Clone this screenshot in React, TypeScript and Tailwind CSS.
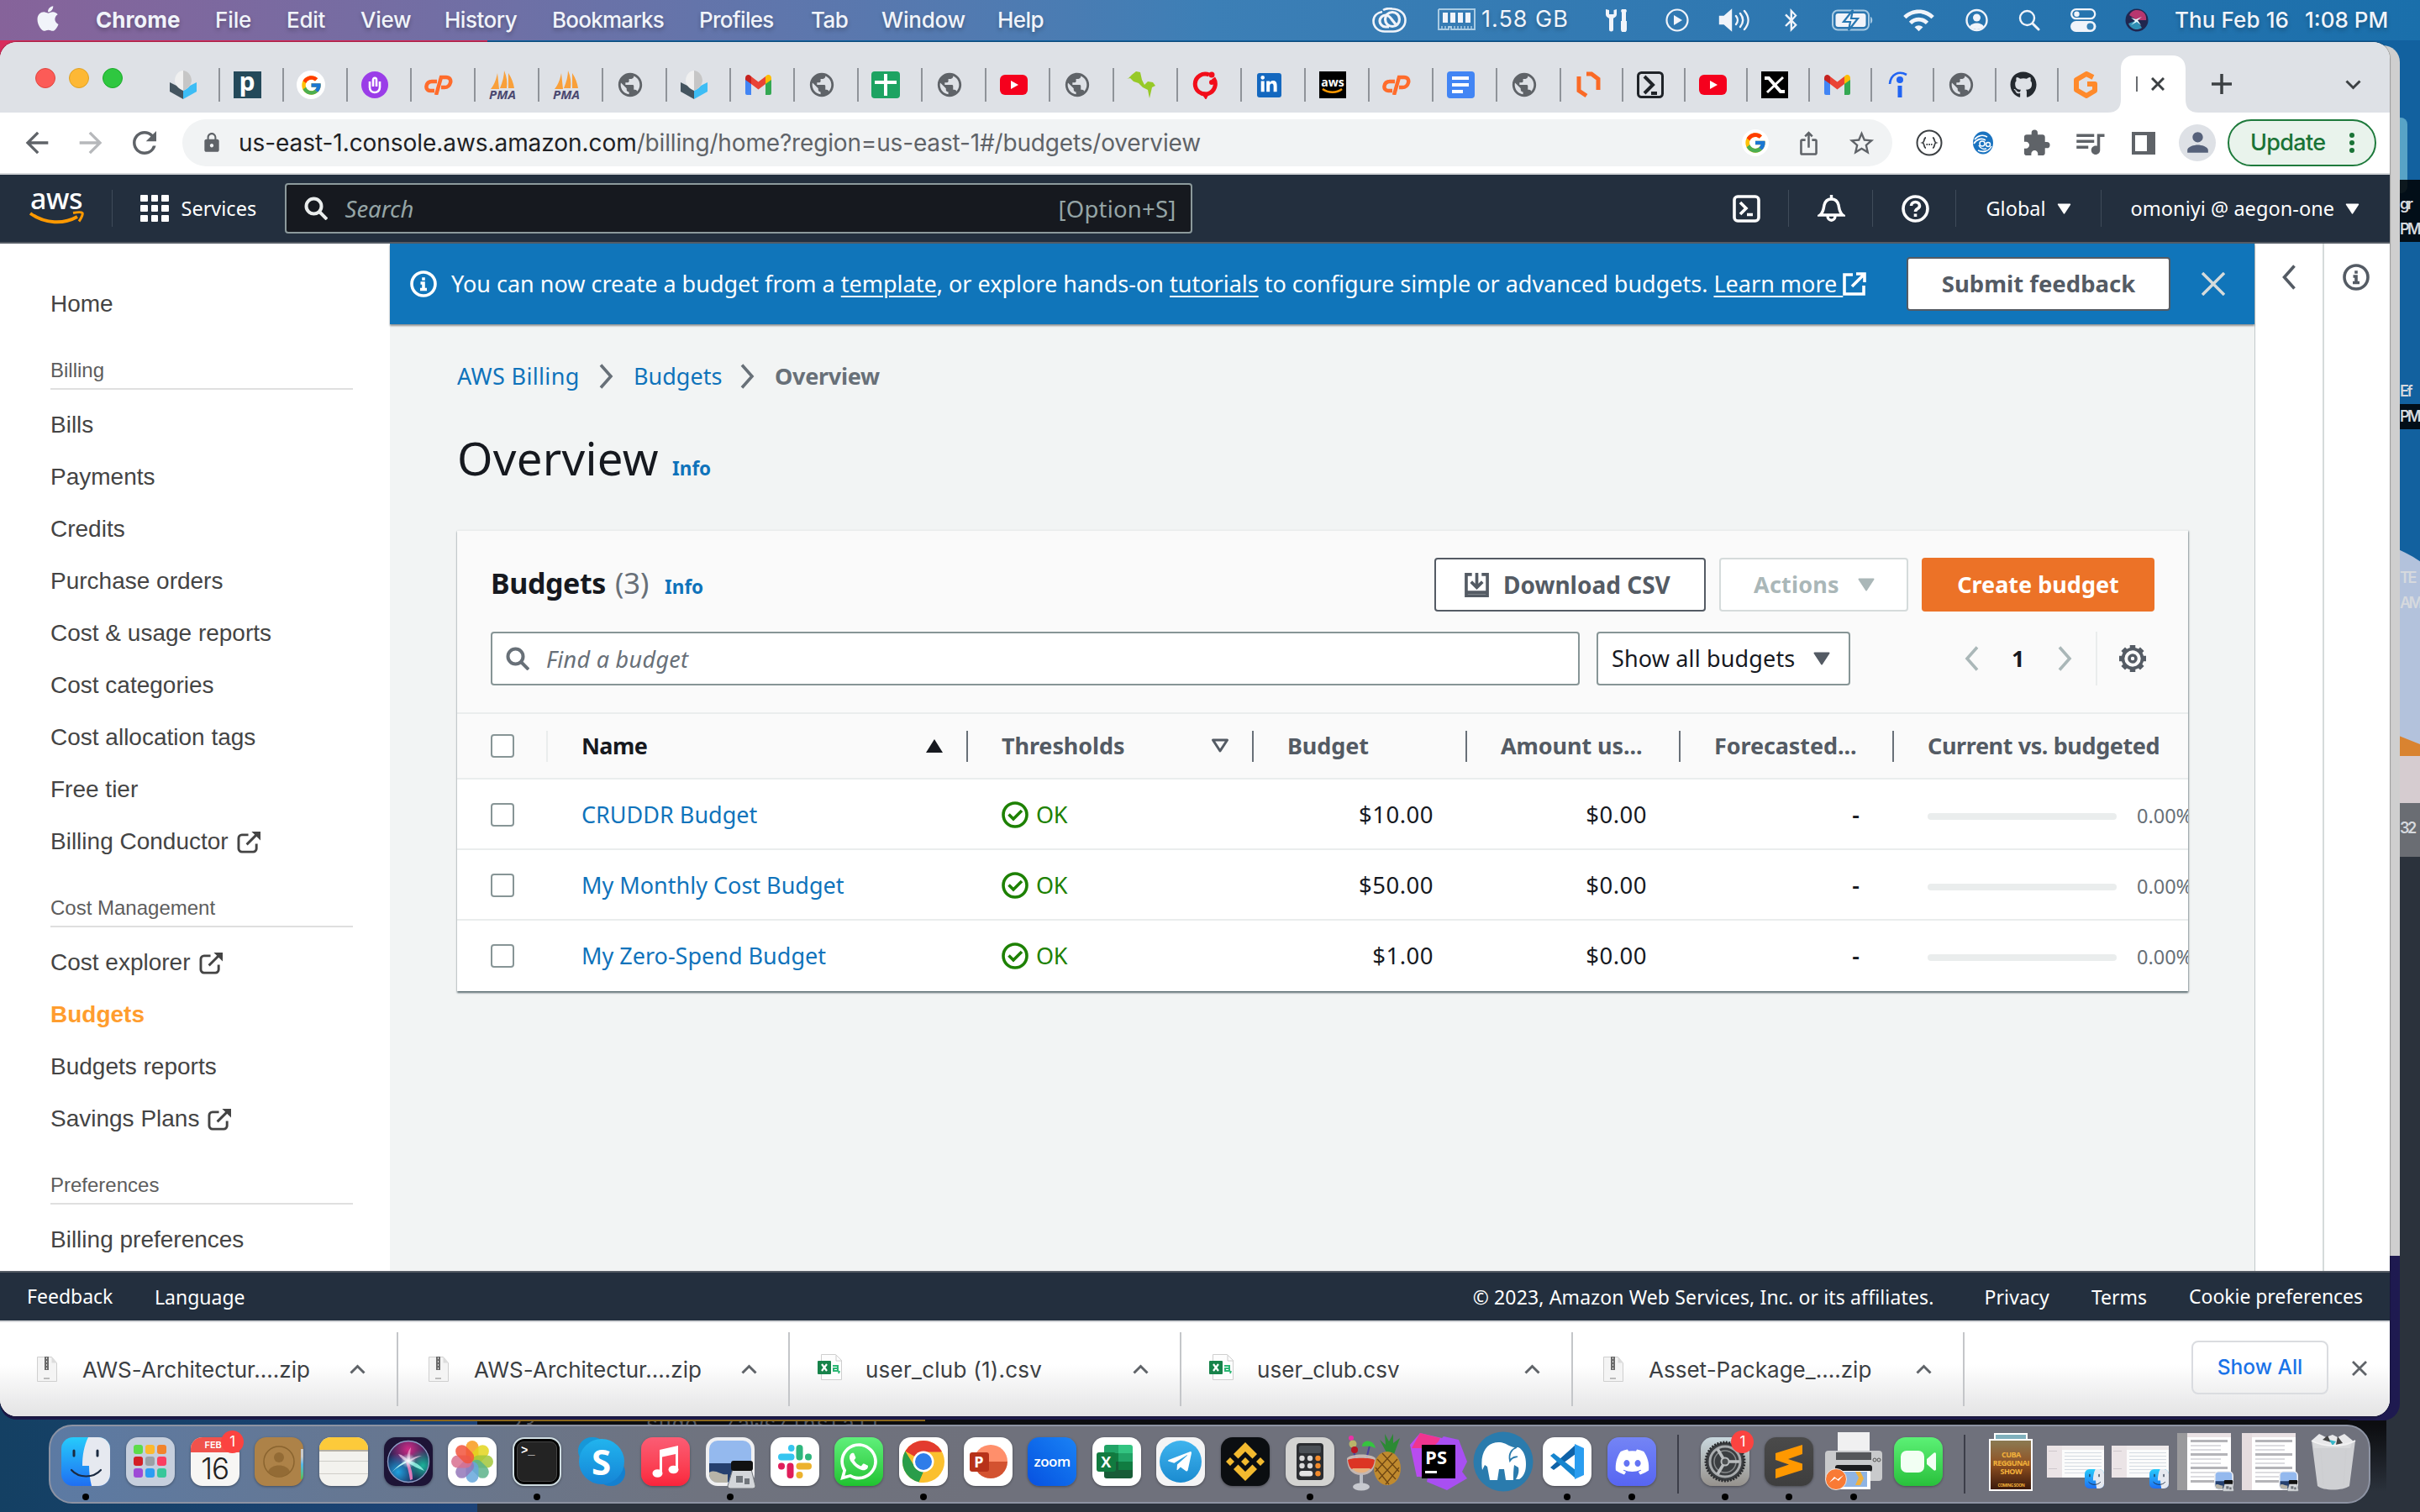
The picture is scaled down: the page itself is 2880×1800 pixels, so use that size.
import React from 'react';
import type { ReactNode } from 'react';
import {
  FaApple, FaBluetoothB, FaDiscord, FaGithub, FaLinkedinIn, FaWhatsapp, FaTelegramPlane,
} from 'react-icons/fa';
import {
  MdArrowBack, MdArrowForward, MdExtension, MdIosShare, MdLock, MdPerson, MdPublic, MdQueueMusic, MdRefresh,
  MdStarBorder, MdWifi,
} from 'react-icons/md';
import { FcGoogle } from 'react-icons/fc';

/* ---------- menu bar ---------- */

const menus = [
  { label: 'File', cls: 'w-[85px] tracking-[-0.1px]' },
  { label: 'Edit', cls: 'w-[88px] tracking-[-0.3px]' },
  { label: 'View', cls: 'w-[100px] tracking-[-0.3px]' },
  { label: 'History', cls: 'w-[128px] tracking-[-0.5px]' },
  { label: 'Bookmarks', cls: 'w-[175px] tracking-[-0.75px]' },
  { label: 'Profiles', cls: 'w-[133px] tracking-[-0.7px]' },
  { label: 'Tab', cls: 'w-[84px] tracking-[-0.6px]' },
  { label: 'Window', cls: 'w-[138px] tracking-[-0.2px]' },
  { label: 'Help', cls: 'w-[70px] tracking-[-0.6px]' },
];

function MenuBar() {
  return (
    <div className="absolute inset-x-0 top-0 flex h-[48px] items-center bg-linear-to-r from-[#86639a] via-[#3c7fb6] via-50% to-[#1a6fab] pb-[1px] font-['Inter',sans-serif] text-[26px] font-medium whitespace-nowrap text-[#f1f4fa] [text-shadow:0_3px_5px_rgba(0,0,0,0.25)]">
      <FaApple className="mb-[4px] ml-[42px] h-[34px] w-[30px] shrink-0" />
      <span className="ml-[42px] w-[142px] font-bold">Chrome</span>
      {menus.map((m) => (
        <span key={m.label} className={m.cls}>{m.label}</span>
      ))}
      <div className="mr-[36px] ml-auto flex items-center">
        <svg className="h-[30px] w-[41px]" viewBox="0 0 41 30" fill="none" stroke="#f1f4fa">
          <path d="M13 3C16 1 20 .8 24 1.500 33 2 39.500 7 39.500 15S33 28.500 25 28.500H15C7 28.500 1.500 23 1.500 16 1.500 10 6 6 12 5" strokeWidth="2.600" />
          <circle cx="24" cy="14" r="8.500" strokeWidth="3.200" />
          <path d="M20 23h-4a7 7 0 0 1 0-14c4 0 6 3 8 6l4 5" strokeWidth="3.200" />
        </svg>
        <svg className="ml-[37px] h-[27px] w-[45px]" viewBox="0 0 45 27" fill="none">
          <path d="M1 1h43v3.500M1 1v17M44 1v17M1 18v7h12v-3h3v3h28v-7" stroke="#a9cbe3" strokeWidth="2" />
          <path d="M6 5h6v12H6zM15 5h6v12h-6zM24 5h6v12h-6zM33 5h6v12h-6z" fill="#f1f4fa" />
          <path d="M5 21v4M9 21v4M20 21v4M24 21v4M28 21v4M32 21v4M36 21v4M40 21v4" stroke="#a9cbe3" strokeWidth="1.500" />
        </svg>
        <span className="ml-[7px] w-[104px] text-[27px] font-normal tracking-[1px]">1.58 GB</span>
        <svg className="ml-[43px] h-[28px] w-[30px]" viewBox="0 0 30 28" fill="#f1f4fa">
          <path d="M1 1v6c0 3 3 4 4 5v13a2.500 2.500 0 0 0 5 0V12c1-1 4-2 4-5V1l-3.500 1v5h-5.500V2z" />
          <path d="M20 1h5l1 2-1 2v10h1v10a3.500 3.500 0 0 1-7 0V15h1V5l-1-2z" />
        </svg>
        <svg className="ml-[42px] h-[28px] w-[28px]" viewBox="0 0 28 28">
          <circle cx="14" cy="14" r="12.500" fill="none" stroke="#f1f4fa" strokeWidth="2.200" />
          <path d="M10 8l10 6-10 6z" fill="#f1f4fa" />
        </svg>
        <svg className="ml-[35px] h-[28px] w-[38px]" viewBox="0 0 38 28" fill="none" stroke="#f1f4fa" strokeWidth="2.400" strokeLinecap="round">
          <path d="M2 10h5l8-7v22l-8-7H2z" fill="#f1f4fa" />
          <path d="M21 9c2.500 3 2.500 7 0 10M26 6c4 5 4 11 0 16M31 3c6 7 6 15 0 22" />
        </svg>
        <FaBluetoothB className="ml-[39px] h-[28px] w-[19px]" />
        <svg className="ml-[39px] h-[26px] w-[49px]" viewBox="0 0 49 26">
          <rect x="1" y="1.500" width="43" height="23" rx="6" fill="none" stroke="#a9cbe3" strokeWidth="2" />
          <rect x="4.500" y="5" width="36" height="16" rx="3" fill="#f1f4fa" />
          <path d="M46 9c3 1 3 7 0 8z" fill="#a9cbe3" />
          <path d="M25 1l-11 14h8l-2 10 11-14h-8z" fill="#f1f4fa" stroke="#2777b1" strokeWidth="2.200" />
        </svg>
        <MdWifi className="ml-[34px] h-[40px] w-[41px]" />
        <svg className="ml-[35px] h-[28px] w-[27px]" viewBox="0 0 27 28">
          <circle cx="13.500" cy="14" r="12" fill="none" stroke="#f1f4fa" strokeWidth="2.400" />
          <circle cx="13.500" cy="11" r="4.500" fill="#f1f4fa" />
          <path d="M5 22c2-6 15-6 17 0-5 4-12 4-17 0z" fill="#f1f4fa" />
        </svg>
        <svg className="ml-[36px] h-[26px] w-[26px]" viewBox="0 0 26 26" fill="none" stroke="#f1f4fa" strokeLinecap="round">
          <circle cx="10.500" cy="10.500" r="8.500" strokeWidth="2.400" />
          <path d="M17 17l7 7" strokeWidth="3" />
        </svg>
        <svg className="ml-[36px] h-[28px] w-[31px]" viewBox="0 0 31 28">
          <rect x="1.200" y="1.200" width="28" height="11" rx="5.500" fill="none" stroke="#f1f4fa" strokeWidth="2.300" />
          <circle cx="7.500" cy="6.700" r="3.200" fill="#f1f4fa" />
          <rect x="0" y="15" width="30.500" height="13" rx="6.500" fill="#f1f4fa" />
          <circle cx="23.500" cy="21.500" r="4" fill="#3680b6" />
        </svg>
        <svg className="ml-[34px] h-[28px] w-[28px]" viewBox="0 0 28 28">
          <circle cx="14" cy="14" r="13.500" fill="#20264f" />
          <path d="M14 2c8 0 12 6 11 12l-11 0-9-6c2-4 5-6 9-6z" fill="#b8366f" />
          <path d="M4 18l10-4 6 9c-6 4-13 2-16-5z" fill="#2f8fb4" />
          <path d="M7 11l6 2 7-3-5 4 4 6-5-4-7 4 5-5z" fill="#e8fbff" />
        </svg>
        <span className="ml-[31px] w-[155px] tracking-[0.100px]">Thu Feb 16</span>
        <span className="w-[101px] tracking-[0px]">1:08 PM</span>
      </div>
    </div>
  );
}

/* ---------- favicons ---------- */

const Globe = () => <MdPublic className="h-[34px] w-[34px] text-[#5f6368]" />;

const Box = () => (
  <svg className="h-[34px] w-[34px]" viewBox="0 0 34 34">
    <path d="M1 14l16 8v12L1 25z" fill="#44545f" />
    <path d="M33 14l-16 8v12l16-9z" fill="#3dbdf5" />
    <path d="M7 12C7 5 12 0 17 0s10 5 10 12c0 5-5 10-10 12C12 22 7 17 7 12z" fill="#f0f0f0" />
    <path d="M17 0c5 0 10 5 10 12 0 5-5 10-10 12z" fill="#c6c6c6" />
  </svg>
);

const Gmail = () => (
  <svg className="h-[24px] w-[31px]" viewBox="0 0 31 24">
    <path d="M0 4v18a2 2 0 0 0 2 2h5V9z" fill="#4285f4" />
    <path d="M31 4v18a2 2 0 0 1-2 2h-5V9z" fill="#34a853" />
    <path d="M24 2v9l7-5V4c0-4-4-5-6-3z" fill="#fbbc04" />
    <path d="M0 4v2l7 5V2L6 1C4-1 0 0 0 4z" fill="#c5221f" />
    <path d="M7 2l8.500 6.500L24 2v9l-8.500 6.500L7 11z" fill="#ea4335" />
  </svg>
);

const YouTube = () => (
  <svg className="h-[24px] w-[33px]" viewBox="0 0 33 24">
    <rect width="33" height="24" rx="6" fill="#f5001d" />
    <path d="M13 7l9 5-9 5z" fill="#fff" />
  </svg>
);

const CPanel = () => (
  <svg className="h-[24px] w-[34px]" viewBox="0 0 34 24" fill="none" stroke="#ff6c2c" strokeWidth="4.500">
    <path d="M15 8H9c-4 0-6 2.500-6.500 5.500S4 19 7 19h5" />
    <path d="M14 24L20 3h6c4 0 6 3 5 6.500S27 15 24 15h-4" />
  </svg>
);

const Pma = () => (
  <div className="flex h-[34px] w-[34px] flex-col items-center justify-end">
    <svg className="h-[22px] w-[30px]" viewBox="0 0 30 22" fill="#f9a03a">
      <path d="M1 22C6 16 8 8 9 3l2 19zM12 21C15 14 17 6 17 0c3 7 4 14 3 21zM22 21V3c4 6 6 12 7 18z" />
    </svg>
    <span className="font-['Open_Sans',sans-serif] text-[15px] leading-[12px] font-bold text-[#4a4870] italic">PMA</span>
  </div>
);

const Tile = ({ cls, children }: { cls: string; children: ReactNode }) => (
  <div className={`flex items-center justify-center overflow-hidden font-['Open_Sans',sans-serif] font-bold text-white ${cls}`}>{children}</div>
);

const G = () => (
  <Tile cls="h-[34px] w-[34px] rounded-full bg-white"><FcGoogle className="h-[27px] w-[27px]" /></Tile>
);

const favicons: ReactNode[] = [
  <Box />,
  <Tile cls="h-[32px] w-[33px] bg-[#24495a] text-[30px] leading-none pb-[8px]">p</Tile>,
  <G />,
  <Tile cls="h-[32px] w-[32px] rounded-full bg-[#9a3de8]">
    <svg className="h-[22px] w-[16px]" viewBox="0 0 16 22" fill="none" stroke="#fff" strokeWidth="2.600"><path d="M2 7v7c0 8 12 8 12 0V7M6 13V5c0-3 4-3 4 0v8" /></svg>
  </Tile>,
  <CPanel />, <Pma />, <Pma />, <Globe />, <Box />, <Gmail />, <Globe />,
  <Tile cls="h-[32px] w-[34px] rounded-[4px] bg-[#1da362]">
    <svg className="h-[26px] w-[26px]" viewBox="0 0 26 26" fill="none" stroke="#fff" strokeWidth="4"><path d="M13 0v26M0 10h26" /></svg>
  </Tile>,
  <Globe />, <YouTube />, <Globe />,
  <svg className="h-[32px] w-[34px]" viewBox="0 0 34 32" fill="#97c927"><path d="M1 9L6 4l5-4 5 1 2 9 3 6 4-4 6 1 3 4-4 2-3 13-2-10-6-3-5-5-6-2-4-4-4 1z" /></svg>,
  <svg className="h-[34px] w-[34px]" viewBox="0 0 34 34" fill="none" stroke="#f20d1a">
    <path d="M22 5a12 12 0 1 0 5 4" strokeWidth="5" /><circle cx="25" cy="5" r="3.500" fill="#f20d1a" stroke="none" /><path d="M13 26l5 7 3-6z" fill="#f20d1a" strokeWidth="2" /><circle cx="25" cy="14" r="3" fill="#f20d1a" stroke="none" />
  </svg>,
  <Tile cls="h-[29px] w-[29px] rounded-[3px] bg-[#1468bf]"><FaLinkedinIn className="h-[22px] w-[22px]" /></Tile>,
  <Tile cls="h-[32px] w-[32px] flex-col bg-black">
    <span className="text-[14px] leading-[14px]">aws</span>
    <svg className="h-[7px] w-[26px]" viewBox="0 0 26 7" fill="none" stroke="#f90" strokeWidth="2.500"><path d="M1 1c7 5 17 5 23 0" /></svg>
  </Tile>,
  <CPanel />,
  <Tile cls="h-[32px] w-[33px] rounded-[4px] bg-[#4285f4]">
    <svg className="h-[20px] w-[20px]" viewBox="0 0 20 20" stroke="#fff" strokeWidth="4"><path d="M0 2h20M0 10h20M0 18h13" /></svg>
  </Tile>,
  <Globe />,
  <svg className="h-[32px] w-[32px]" viewBox="0 0 32 32" fill="none" stroke="#fa6a26" strokeWidth="5"><path d="M5 6v17l9 6M14 3h6l8 6v13" /></svg>,
  <svg className="h-[32px] w-[32px]" viewBox="0 0 32 32" fill="none" stroke="#1f2328"><rect x="1.500" y="1.500" width="29" height="29" rx="4" strokeWidth="3" /><path d="M9 6l10 10L9 26M17 26h7" strokeWidth="4" /></svg>,
  <YouTube />,
  <Tile cls="h-[32px] w-[32px] bg-black">
    <svg className="h-[22px] w-[28px]" viewBox="0 0 28 22" fill="none" stroke="#fff" strokeWidth="4"><path d="M2 3h5l14 16h5" /><path d="M24 2L5 20" strokeWidth="3" /></svg>
  </Tile>,
  <Gmail />,
  <svg className="h-[32px] w-[26px]" viewBox="0 0 26 32" fill="none" stroke="#2164f3"><path d="M2 15C3 3 13-1 22 4" strokeWidth="2.600" /><circle cx="14" cy="10" r="4" fill="#2164f3" stroke="none" /><path d="M14 17v14" strokeWidth="5" /></svg>,
  <Globe />,
  <FaGithub className="h-[32px] w-[32px] text-[#24292f]" />,
  <svg className="h-[32px] w-[32px]" viewBox="0 0 32 32" fill="none" stroke="#ff8a2b" strokeWidth="6" strokeLinejoin="round"><path d="M25 7l-8-4L5 10v12l12 7 10-6v-8h-9" /></svg>,
];

function TabStrip() {
  return (
    <div className="flex h-[84px] shrink-0 items-start bg-[#dee1e6]">
      <div className="mt-[31px] ml-[42px] flex w-[144px] gap-[16px]">
        <div className="h-[24px] w-[24px] rounded-full border border-[#e0443e] bg-[#fc5b57]" />
        <div className="h-[24px] w-[24px] rounded-full border border-[#dea123] bg-[#fdb835]" />
        <div className="h-[24px] w-[24px] rounded-full border border-[#1aab29] bg-[#2fc740]" />
      </div>
      {favicons.map((icon, i) => (
        <div
          key={i}
          className={
            (i < 22 ? 'w-[76px] ' : 'w-[74px] ') +
            'mt-[31px] flex h-[40px] shrink-0 items-center border-r-2 ' +
            (i === favicons.length - 1 ? 'border-transparent' : 'border-[#8f9399]')
          }
        >
          <div className="ml-[14px] flex w-[36px] items-center justify-center">{icon}</div>
        </div>
      ))}
      <div className="relative mt-[16px] flex h-[68px] w-[78px] shrink-0 items-center">
        <svg className="absolute top-0 left-[-16px] h-[68px] w-[109px]" viewBox="0 0 109 68" fill="#fff">
          <path d="M0 68c12 0 16-6 16-16V16C16 6 22 0 32 0h45c10 0 16 6 16 16v36c0 10 4 16 16 16z" />
        </svg>
        <div className="relative ml-[18px] h-[18px] w-[2px] bg-[#6a6d71]" />
        <svg className="relative ml-[16px] h-[16px] w-[16px]" viewBox="0 0 16 16" stroke="#3c4043" strokeWidth="3"><path d="M1 1l14 14M15 1L1 15" /></svg>
      </div>
      <svg className="mt-[38px] ml-[29px] h-[24px] w-[26px]" viewBox="0 0 26 24" stroke="#3c4043" strokeWidth="3.500"><path d="M13 0v24M1 12h24" /></svg>
      <svg className="mt-[45px] ml-[134px] h-[12px] w-[19px]" viewBox="0 0 19 12" fill="none" stroke="#3c4043" strokeWidth="3"><path d="M1.500 1.500l8 8 8-8" /></svg>
    </div>
  );
}

function Toolbar() {
  return (
    <div className="flex h-[74px] shrink-0 items-center border-b-2 border-[#d5d7da] bg-white font-['Inter',sans-serif] text-[28px] whitespace-nowrap text-[#5f6368]">
      <MdArrowBack className="ml-[24px] h-[40px] w-[40px]" />
      <MdArrowForward className="ml-[24px] h-[40px] w-[40px] text-[#b6b8bb]" />
      <MdRefresh className="ml-[23px] h-[42px] w-[42px]" />
      <div className="ml-[24px] flex h-[56px] w-[2035px] items-center rounded-full bg-[#f1f3f4]">
        <MdLock className="ml-[22px] h-[26px] w-[26px]" />
        <span className="ml-[19px] tracking-[-0.060px] text-[#202124]">us-east-1.console.aws.amazon.com</span>
        <span className="tracking-[-0.160px]">/billing/home?region=us-east-1#/budgets/overview</span>
        <div className="mr-[19px] ml-auto flex items-center">
          <Tile cls="mr-[1px] h-[32px] w-[32px] rounded-full bg-white"><FcGoogle className="h-[28px] w-[28px]" /></Tile>
          <MdIosShare className="ml-[31px] h-[31px] w-[31px]" />
          <MdStarBorder className="ml-[30px] h-[35px] w-[35px]" />
        </div>
      </div>
      <svg className="ml-[28px] h-[32px] w-[32px]" viewBox="0 0 32 32" fill="none" stroke="#3c4043">
        <circle cx="16" cy="16" r="14.500" strokeWidth="2" />
        <path d="M12 10c-3 0-1 5-4 6 3 1 1 6 4 6M20 10c3 0 1 5 4 6-3 1-1 6-4 6" strokeWidth="1.800" />
        <path d="M12.500 18h7" strokeWidth="2" strokeDasharray="1.600 1.200" />
      </svg>
      <svg className="ml-[36px] h-[28px] w-[24px]" viewBox="0 0 24 28">
        <ellipse cx="12" cy="14" rx="12" ry="13.500" fill="#1a73c0" />
        <path d="M2 10c4-5 10-6 15-3M1 15c4-6 10-7 14-4M6 23c6 3 13 1 16-5M7 17c2 4 6 5 9 4" fill="none" stroke="#fff" strokeWidth="1.600" />
        <circle cx="11" cy="15" r="3" fill="none" stroke="#fff" strokeWidth="1.500" /><circle cx="18" cy="16" r="2.500" fill="none" stroke="#fff" strokeWidth="1.500" />
      </svg>
      <MdExtension className="ml-[34px] h-[35px] w-[35px]" />
      <MdQueueMusic className="ml-[25px] h-[42px] w-[42px]" />
      <div className="ml-[29px] h-[27px] w-[28px] border-[4px] border-r-[10px] border-[#5f6368]" />
      <div className="ml-[28px] flex h-[44px] w-[44px] items-end justify-center overflow-hidden rounded-full bg-[#dee1e6]">
        <MdPerson className="mb-[4px] h-[37px] w-[37px] text-[#56617a]" />
      </div>
      <div className="ml-[14px] flex h-[56px] w-[177px] items-center rounded-full border-2 border-[#1e7a3c] bg-[#e9f3ec] text-[27px] font-medium text-[#1a7336]">
        <span className="ml-[25px] w-[88px] tracking-[-0.700px]">Update</span>
        <svg className="ml-[30px] h-[24px] w-[6px]" viewBox="0 0 6 24" fill="#1a7336"><circle cx="3" cy="3" r="3" /><circle cx="3" cy="12" r="3" /><circle cx="3" cy="21" r="3" /></svg>
      </div>
    </div>
  );
}

/* ---------- AWS console ---------- */

const SearchIcon = ({ cls }: { cls: string }) => (
  <svg className={cls} viewBox="0 0 28 28" fill="none" stroke="currentColor" strokeWidth="4"><circle cx="11.500" cy="11.500" r="9" /><path d="M18 18l9 9" /></svg>
);

const Caret = ({ cls }: { cls: string }) => (
  <svg className={cls} viewBox="0 0 20 16" fill="currentColor" stroke="currentColor" strokeWidth="2" strokeLinejoin="round"><path d="M1.500 1.500h17L10 14.500z" /></svg>
);

const InfoIcon = ({ cls }: { cls: string }) => (
  <svg className={cls} viewBox="0 0 32 32" fill="none" stroke="currentColor"><circle cx="16" cy="16" r="14" strokeWidth="3.600" /><path d="M12.500 15H16v7M12 22.500h8M14.200 10h3.600" strokeWidth="3.600" /></svg>
);

const External = ({ cls }: { cls: string }) => (
  <svg className={cls} viewBox="0 0 28 28" fill="none" stroke="currentColor" strokeWidth="3.600"><path d="M12 3H2v23h23V16M16 2h10v10M25 3L11 17" /></svg>
);

const ConsoleDivider = () => <div className="h-[44px] w-[1px] bg-[#3f4b59]" />;

function ConsoleHeader() {
  return (
    <div className="flex h-[82px] shrink-0 items-center border-b-2 border-[#545b64] bg-[#232f3e] font-['Noto_Sans',sans-serif] text-[23.500px] whitespace-nowrap text-white">
      <div className="mb-[3px] ml-[34px] flex w-[66px] flex-col items-center">
        <span className="h-[25px] text-[34px] leading-[20px] font-medium tracking-[-0.500px]">aws</span>
        <svg className="h-[16px] w-[66px]" viewBox="0 0 66 16" fill="none" stroke="#f90"><path d="M2 3c18 13 40 13 56 4" strokeWidth="4" /><path d="M53 2.500c5-1 10-1 11 0s-1 6-4 10" strokeWidth="3" /></svg>
      </div>
      <div className="ml-[33px] h-[44px] w-[1px] bg-[#3f4b59]" />
      <div className="ml-[33px] grid grid-cols-3 gap-[4px]">
        {Array.from({ length: 9 }, (_, i) => <div key={i} className="h-[8px] w-[8.500px] rounded-[1px] bg-white" />)}
      </div>
      <span className="ml-[15px] w-[123px] pt-[1px]">Services</span>
      <div className="flex h-[60px] w-[1080px] items-center rounded-[4px] border-2 border-[#8c9a9c] bg-[#16191f] text-[27.500px] text-[#95a5a6]">
        <SearchIcon cls="ml-[21px] h-[28px] w-[28px] text-[#eaeded]" />
        <span className="ml-[21px] pt-[2px] italic">Search</span>
        <span className="mr-[17px] ml-auto pt-[1px] tracking-[0.200px]">[Option+S]</span>
      </div>
      <svg className="ml-[643px] h-[33px] w-[33px]" viewBox="0 0 33 33" fill="none" stroke="#fff" strokeWidth="3.600"><rect x="2" y="2" width="29" height="29" rx="4" /><path d="M9 9l7 7-7 7M17 23.500h7" /></svg>
      <div className="ml-[33px]"><ConsoleDivider /></div>
      <svg className="ml-[34px] h-[33px] w-[33px]" viewBox="0 0 33 33" fill="none" stroke="#fff" strokeWidth="3.400"><path d="M3 24c4-3 4-7 5-12 1-4 4-7 8.500-7S24 8 25 12c1 5 1 9 5 12zM16.500 0v5M12 25c0 7 9 7 9 0" /></svg>
      <div className="ml-[32px]"><ConsoleDivider /></div>
      <svg className="ml-[34px] h-[33px] w-[33px]" viewBox="0 0 33 33" fill="none" stroke="#fff" strokeWidth="3.600"><circle cx="16.500" cy="16.500" r="14.500" /><path d="M11.500 13c0-6 10-6 10 0 0 4-5 3-5 7M16.500 22.500v3.500" /></svg>
      <div className="ml-[31px]"><ConsoleDivider /></div>
      <span className="ml-[36px] w-[84px] pt-[1px]">Global</span>
      <Caret cls="h-[13px] w-[17px]" />
      <div className="ml-[35px]"><ConsoleDivider /></div>
      <span className="ml-[35px] w-[255px] pt-[1px] tracking-[0.050px]">omoniyi @ aegon-one</span>
      <Caret cls="h-[13px] w-[17px]" />
    </div>
  );
}

type NavItem = { label: string; external?: boolean; active?: boolean };

const navGroups: { title: string; items: NavItem[] }[] = [
  {
    title: 'Billing',
    items: [
      { label: 'Bills' }, { label: 'Payments' }, { label: 'Credits' }, { label: 'Purchase orders' },
      { label: 'Cost & usage reports' }, { label: 'Cost categories' }, { label: 'Cost allocation tags' },
      { label: 'Free tier' }, { label: 'Billing Conductor', external: true },
    ],
  },
  {
    title: 'Cost Management',
    items: [
      { label: 'Cost explorer', external: true }, { label: 'Budgets', active: true },
      { label: 'Budgets reports' }, { label: 'Savings Plans', external: true },
    ],
  },
  { title: 'Preferences', items: [{ label: 'Billing preferences' }] },
];

function SideNav() {
  return (
    <nav className="flex w-[464px] shrink-0 flex-col bg-white pt-[41px] pl-[60px] font-['Liberation_Sans',sans-serif] text-[28px] whitespace-nowrap text-[#444]">
      <div className="flex h-[62px] items-center">Home</div>
      {navGroups.map((g) => (
        <div key={g.title} className="flex flex-col">
          <div className="flex h-[71px] w-[360px] items-end border-b-2 border-[#dfdfdf] text-[24px] leading-[42px] text-[#5d5d5d]">{g.title}</div>
          <div className="pt-[11px]">
            {g.items.map((n) => (
              <div key={n.label} className={'flex h-[62px] items-center ' + (n.active ? 'font-bold text-[#ff9d2e]' : '')}>
                {n.label}
                {n.external && (
                  <svg className="ml-[10px] h-[27px] w-[29px]" viewBox="0 0 30 28" fill="none" stroke="#444" strokeWidth="3"><path d="M14 5H6a4 4 0 0 0-4 4v13a4 4 0 0 0 4 4h14a4 4 0 0 0 4-4v-6M12 17L26 3" /><path d="M18 1h11v11z" fill="#444" stroke="none" /></svg>
                )}
              </div>
            ))}
          </div>
        </div>
      ))}
    </nav>
  );
}

function Banner() {
  return (
    <div className="relative flex h-[96px] shrink-0 items-center bg-[#1075ba] pl-[24px] text-[27px] whitespace-nowrap text-white shadow-[0_2px_2px_rgba(0,0,0,0.400)]">
      <InfoIcon cls="h-[32px] w-[32px]" />
      <span className="ml-[17px]">
        You can now create a budget from a <span className="underline underline-offset-4">template</span>, or explore hands-on{' '}
        <span className="underline underline-offset-4">tutorials</span> to configure simple or advanced budgets.{' '}
        <span className="underline underline-offset-4">Learn more&nbsp;</span>
      </span>
      <External cls="h-[28px] w-[28px]" />
      <div className="ml-auto flex h-[64px] w-[314px] items-center justify-center rounded-[4px] border-2 border-[#545b64] bg-white text-[27.500px] font-bold text-[#545b64]">Submit feedback</div>
      <svg className="mr-[35px] ml-[37px] h-[28px] w-[28px]" viewBox="0 0 28 28" stroke="#d5dbdb" strokeWidth="3.500"><path d="M1 1l26 26M27 1L1 27" /></svg>
    </div>
  );
}

const Checkbox = () => <div className="ml-[40px] h-[28px] w-[28px] rounded-[4px] border-2 border-[#879596] bg-white" />;

const ChevronRight = ({ cls }: { cls: string }) => (
  <svg className={cls} viewBox="0 0 17 30" fill="none" stroke="currentColor" strokeWidth="3.600"><path d="M2 1.500l12 13.500L2 28.500" /></svg>
);

const rows = [
  { name: 'CRUDDR Budget', budget: '$10.00' },
  { name: 'My Monthly Cost Budget', budget: '$50.00' },
  { name: 'My Zero-Spend Budget', budget: '$1.00' },
];

const HeadCell = ({ children }: { children: ReactNode }) => (
  <div className="flex items-center justify-between">
    <span className="pl-[40px]">{children}</span>
    <div className="h-[37px] w-[2px] bg-[#687078]" />
  </div>
);

function BudgetsCard() {
  return (
    <section className="flex w-[2060px] shrink-0 flex-col overflow-hidden bg-white text-[27px] whitespace-nowrap text-[#16191f]">
      <div className="flex flex-col gap-[24px] border-t border-b-2 border-[#eaeded] bg-[#fafafa] px-[40px] pt-[32px] pb-[32px]">
        <div className="flex h-[64px] items-center">
          <div className="flex w-[1123px] items-baseline leading-[60px]">
            <h2 className="w-[148px] text-[34px] font-bold tracking-[-0.400px]">Budgets</h2>
            <span className="w-[59px] text-[34.500px] text-[#687078]">(3)</span>
            <span className="text-[22.500px] font-bold text-[#0f73bb]">Info</span>
          </div>
          <div className="flex h-[64px] w-[323px] items-center rounded-[4px] border-2 border-[#545b64] bg-white font-bold text-[#545b64]">
            <svg className="ml-[34px] h-[29px] w-[29px]" viewBox="0 0 30 30" fill="none" stroke="currentColor" strokeWidth="3.800"><path d="M9 2H2v26h26V2h-7M15 0v17M8 11l7 7 7-7M2 24h26" /></svg>
            <span className="ml-[17px] text-[28px]">Download CSV</span>
          </div>
          <div className="ml-[16px] flex h-[64px] w-[225px] items-center rounded-[4px] border-2 border-[#d5dbdb] bg-white font-bold text-[#aab7b8]">
            <span className="ml-[39px] w-[124px] tracking-[0.200px]">Actions</span>
            <Caret cls="h-[16px] w-[20px]" />
          </div>
          <div className="ml-[16px] flex h-[64px] w-[277px] items-center justify-center rounded-[4px] bg-[#ec7227] font-bold text-white">Create budget</div>
        </div>
        <div className="flex h-[64px] items-center">
          <div className="flex h-[64px] w-[1296px] items-center rounded-[4px] border-2 border-[#879596] bg-white text-[#687078]">
            <SearchIcon cls="ml-[16px] h-[28px] w-[28px]" />
            <span className="ml-[20px] pt-[2px] tracking-[0.300px] italic">Find a budget</span>
          </div>
          <div className="ml-[20px] flex h-[64px] w-[302px] items-center rounded-[4px] border-2 border-[#879596] bg-white">
            <span className="ml-[16px] w-[240px] tracking-[0.150px]">Show all budgets</span>
            <Caret cls="h-[16px] w-[20px] text-[#545b64]" />
          </div>
          <ChevronRight cls="ml-[136px] h-[30px] w-[17px] rotate-180 text-[#aab7b8]" />
          <span className="ml-[39px] w-[55px] font-bold">1</span>
          <ChevronRight cls="h-[30px] w-[17px] text-[#aab7b8]" />
          <div className="ml-[28px] h-[64px] w-[2px] bg-[#eaeded]" />
          <svg className="ml-[26px] h-[32px] w-[32px]" viewBox="0 0 32 32" fill="none" stroke="#545b64" strokeLinejoin="round">
            <circle cx="16" cy="16" r="11.500" strokeWidth="3.600" />
            <path d="M16 0v4M16 28v4M0 16h4M28 16h4M4.700 4.700l2.800 2.800M24.500 24.500l2.800 2.800M4.700 27.300l2.800-2.800M24.500 7.500l2.800-2.800" strokeWidth="6.500" />
            <circle cx="16" cy="16" r="4" strokeWidth="3.600" />
          </svg>
        </div>
      </div>
      <div className="grid h-[78px] grid-cols-[108px_500px_340px_254px_254px_254px_350px] items-center border-b-2 border-[#eaeded] bg-[#fafafa] font-bold tracking-[-0.100px] text-[#545b64]">
        <div className="flex items-center justify-between"><Checkbox /><div className="h-[37px] w-[2px] bg-[#eaeded]" /></div>
        <div className="flex items-center text-[#16191f]">
          <span className="ml-[40px] w-[409px] tracking-[-0.600px]">Name</span>
          <svg className="h-[17px] w-[22px]" viewBox="0 0 22 17" fill="#16191f"><path d="M11 0l10 16H1z" /></svg>
          <div className="ml-auto h-[37px] w-[2px] bg-[#687078]" />
        </div>
        <div className="flex items-center">
          <span className="ml-[40px] w-[249px]">Thresholds</span>
          <svg className="h-[18px] w-[22px]" viewBox="0 0 22 18" fill="none" stroke="#545b64" strokeWidth="3" strokeLinejoin="round"><path d="M2.500 2h17L11 15z" /></svg>
          <div className="ml-auto h-[37px] w-[2px] bg-[#687078]" />
        </div>
        <HeadCell>Budget</HeadCell>
        <HeadCell>Amount us...</HeadCell>
        <HeadCell>Forecasted...</HeadCell>
        <span className="pl-[40px] tracking-[-0.400px]">Current vs. budgeted</span>
      </div>
      {rows.map((r) => (
        <div key={r.name} className="grid h-[84px] grid-cols-[108px_500px_340px_254px_254px_254px_350px] items-center border-b-2 border-[#eaeded] pt-[2px] last:border-transparent">
          <Checkbox />
          <span className="pl-[40px] text-[#0f73bb]">{r.name}</span>
          <div className="flex items-center pl-[40px] text-[#1d8102]">
            <svg className="h-[32px] w-[32px]" viewBox="0 0 32 32" fill="none" stroke="currentColor" strokeWidth="3.600"><circle cx="16" cy="16" r="14" /><path d="M8.500 15.500l5.500 5.500 10-10" /></svg>
            <span className="ml-[9px] tracking-[-0.300px]">OK</span>
          </div>
          <span className="pr-[40px] text-right text-[27.500px] tracking-[0.500px]">{r.budget}</span>
          <span className="pr-[40px] text-right text-[27.500px] tracking-[0.500px]">$0.00</span>
          <span className="pr-[41px] text-right font-semibold">-</span>
          <div className="flex items-center overflow-hidden pl-[40px] text-[23.500px] text-[#687078]">
            <div className="mt-[3px] h-[8px] w-[225px] shrink-0 rounded-full bg-[#eaeded]" />
            <span className="mt-[4px] ml-[24px]">0.00%</span>
          </div>
        </div>
      ))}
    </section>
  );
}

function MainArea() {
  return (
    <main className="flex w-[2219px] shrink-0 flex-col bg-[#f2f4f4] font-['Noto_Sans',sans-serif]">
      <Banner />
      <div className="flex h-[124px] shrink-0 items-center pl-[80px] text-[27px] whitespace-nowrap text-[#0f73bb]">
        <span className="w-[169px] tracking-[0.350px]">AWS Billing</span>
        <ChevronRight cls="h-[30px] w-[17px] text-[#687078]" />
        <span className="ml-[24px] w-[127px]">Budgets</span>
        <ChevronRight cls="h-[30px] w-[17px] text-[#687078]" />
        <span className="ml-[24px] font-bold tracking-[-0.300px] text-[#687078]">Overview</span>
      </div>
      <div className="flex h-[121px] shrink-0 items-baseline pl-[80px] leading-[71px]">
        <h1 className="w-[256px] text-[54.500px] tracking-[0.250px] text-[#16191f]">Overview</h1>
        <span className="text-[22.500px] font-bold text-[#0f73bb]">Info</span>
      </div>
      <div className="ml-[80px] w-[2060px] shadow-[0_2px_2px_rgba(0,28,36,0.550),1px_1px_2px_rgba(0,28,36,0.250)]"><BudgetsCard /></div>
    </main>
  );
}

function ConsoleFooter() {
  return (
    <footer className="flex h-[61px] shrink-0 items-center border-t-2 border-b-2 border-t-[#545b64] border-b-[#d5d7da] bg-[#232f3e] pr-[32px] pl-[32px] font-['Noto_Sans',sans-serif] text-[23px] whitespace-nowrap text-white">
      <span className="w-[152px]">Feedback</span>
      <span className="pt-[2px]">Language</span>
      <span className="mr-[60px] ml-auto pt-[2px] tracking-[0.140px]">© 2023, Amazon Web Services, Inc. or its affiliates.</span>
      <span className="mr-[50px] pt-[2px] tracking-[0.100px]">Privacy</span>
      <span className="mr-[50px] pt-[2px]">Terms</span>
      <span className="tracking-[-0.050px]">Cookie preferences</span>
    </footer>
  );
}

const ZipIcon = () => (
  <svg className="h-[30px] w-[24px]" viewBox="0 0 24 30"><path d="M.5.500h17l6 7v22H.5z" fill="#f4f4f4" stroke="#cfcfcf" /><path d="M17.500.500v7h6z" fill="#dcdcdc" /><path d="M9 0h5v16H9z" fill="#6b6b6b" /><path d="M11.500 1v14" stroke="#ddd" strokeDasharray="2 2" /><path d="M8 26h7" stroke="#bbb" strokeWidth="2" /></svg>
);

const CsvIcon = () => (
  <svg className="mt-[-4px] h-[32px] w-[30px]" viewBox="0 0 30 32"><path d="M4.500.500h17l7 7v23H4.500z" fill="#fdfdfd" stroke="#cfcfcf" /><path d="M22 1v7h7" fill="none" stroke="#ccc" /><rect y="8" width="16" height="16" rx="1" fill="#17834a" /><path d="M5 12l6 8M11 12l-6 8" stroke="#fff" strokeWidth="2.200" /><path d="M18 14h6v6h-5v-3h5M26 20l-1 3" fill="none" stroke="#2bb673" strokeWidth="2" /></svg>
);

const downloads = [
  { name: 'AWS-Architectur....zip', icon: <ZipIcon />, cls: 'tracking-[0.020px]' },
  { name: 'AWS-Architectur....zip', icon: <ZipIcon />, cls: 'tracking-[0.020px]' },
  { name: 'user_club (1).csv', icon: <CsvIcon />, cls: 'tracking-[0.250px]' },
  { name: 'user_club.csv', icon: <CsvIcon />, cls: 'tracking-[0.050px]' },
  { name: 'Asset-Package_....zip', icon: <ZipIcon />, cls: 'tracking-[0.020px]' },
];

function DownloadBar() {
  return (
    <div className="flex h-[112px] shrink-0 items-center bg-linear-to-b from-white from-45% to-[#e3e3e4] pl-[8px] font-['Inter',sans-serif] text-[26px] whitespace-nowrap text-[#3c4043]">
      {downloads.map((d, i) => (
        <div key={i} className="flex h-[88px] w-[466px] items-center border-r-2 border-[#c4c6c9]">
          <div className="ml-[33px] flex w-[30px] justify-center">{d.icon}</div>
          <span className={'ml-[27px] ' + d.cls}>{d.name}</span>
          <svg className="mr-[37px] ml-auto h-[12px] w-[19px]" viewBox="0 0 19 12" fill="none" stroke="#5f6368" strokeWidth="3"><path d="M1.500 10.500l8-8 8 8" /></svg>
        </div>
      ))}
      <div className="mb-[5px] ml-[270px] flex h-[64px] w-[163px] items-center justify-center rounded-[8px] border-2 border-[#dadce0] text-[24.500px] font-medium text-[#1a73e8]">Show All</div>
      <svg className="mb-[2px] ml-[28px] h-[18px] w-[18px]" viewBox="0 0 18 18" stroke="#5f6368" strokeWidth="2.800"><path d="M1 1l16 16M17 1L1 17" /></svg>
    </div>
  );
}

function ChromeWindow() {
  return (
    <div className="absolute top-[50px] left-0 flex h-[1636px] w-[2844px] flex-col overflow-hidden rounded-[20px] bg-white shadow-[0_0_1px_1px_rgba(0,0,0,0.250)]">
      <TabStrip />
      <Toolbar />
      <ConsoleHeader />
      <div className="flex min-h-0 flex-1 overflow-hidden">
        <SideNav />
        <MainArea />
        <aside className="flex w-[81px] shrink-0 justify-center border-l border-[#c3c9cb] bg-white pt-[25px] text-[#545b64]">
          <ChevronRight cls="h-[30px] w-[18px] rotate-180" />
        </aside>
        <aside className="flex w-[80px] shrink-0 justify-center border-l-2 border-[#d5dbdb] bg-white pt-[24px] pr-[2px] text-[#545b64]">
          <InfoIcon cls="h-[32px] w-[32px]" />
        </aside>
      </div>
      <ConsoleFooter />
      <DownloadBar />
    </div>
  );
}

/* ---------- desktop behind the window ---------- */

function Desktop() {
  return (
    <>
      <div className="absolute top-[1500px] left-0 h-[300px] w-[568px] bg-linear-to-r from-[#144063] to-[#1d4378]" />
      <div className="absolute top-[1640px] left-[568px] h-[160px] w-[2312px] bg-linear-to-b from-[#0c0d10] from-35% to-[#2b323c] to-85%" />
      <div className="absolute top-[1020px] left-[2840px] h-[780px] w-[40px] bg-[#2b323c]" />
      <div className="absolute top-[1680px] left-[568px] flex font-['Liberation_Mono',monospace] text-[26px] leading-[34px] whitespace-nowrap text-[#55585f]">
        <span className="w-[200px] pl-[38px]">23</span>
        <span>sudo ./aws/install</span>
      </div>
      <div className="absolute top-[1688px] left-[488px] h-[4px] w-[613px] bg-[#8a671c]" />
      <div className="absolute top-[140px] left-[2830px] h-[90px] w-[35px] rounded-[8px] bg-[#58a3c6]" />
      <svg className="absolute top-[640px] left-[2700px] h-[260px] w-[190px]" viewBox="0 0 190 260">
        <path d="M0 0h100c36 4 66 16 90 36v224H0z" fill="#b3c2dc" />
        <path d="M130 226l60 24v10h-60z" fill="#d98330" />
      </svg>
      <div className="absolute top-[900px] left-[2856px] h-[56px] w-[24px] bg-[#d6ccd0]" />
      <div className="absolute top-[956px] left-[2856px] h-[64px] w-[24px] bg-[#6a6d73]" />
      <div className="absolute inset-y-0 left-[2856px] w-[24px] font-['Inter',sans-serif] text-[18px] leading-[30px] font-semibold tracking-[-2.500px] whitespace-nowrap text-[#d6d9de]">
        <div className="mt-[214px] bg-black/85 pt-[14px]">gr<br />PM</div>
        <div className="mt-[163px]">Ef<br /><span className="block bg-black/85">PM</span></div>
        <div className="mt-[162px]">TE<br />AM</div>
        <div className="mt-[238px]">32</div>
      </div>
      <div className="absolute top-[54px] left-[2780px] h-[1637px] w-[76px] rounded-[20px] bg-linear-to-b from-[#cfcfcf] from-88% to-[#1e1a50] to-88%" />
      <div className="absolute top-[1660px] left-0 h-[30px] w-[2840px] rounded-b-[20px] bg-[#1b1848]" />
    </>
  );
}

/* ---------- dock ---------- */

const App58 = ({ cls, children }: { cls: string; children?: ReactNode }) => (
  <div className={`flex h-[58px] w-[58px] items-center justify-center overflow-hidden rounded-[14px] shadow-[0_1px_3px_rgba(0,0,0,0.350)] ${cls}`}>{children}</div>
);

const Finder = ({ cls }: { cls: string }) => (
  <svg className={cls} viewBox="0 0 58 58">
    <defs>
      <linearGradient id="finder" x1="0" y1="0" x2="0" y2="1"><stop offset="0" stopColor="#26cbfb" /><stop offset="1" stopColor="#1f6ff2" /></linearGradient>
      <clipPath id="finderClip"><rect width="58" height="58" rx="14" /></clipPath>
    </defs>
    <g clipPath="url(#finderClip)">
      <rect width="58" height="58" fill="url(#finder)" />
      <path d="M32 0c-5 10-7 22-7 34h8c0 8 1 16 3 24h22V0z" fill="#e6e9f0" />
      <path d="M15 16v6M43 16v6" stroke="#1b2a40" strokeWidth="3" strokeLinecap="round" />
      <path d="M12 39c9 10 26 10 35 0" fill="none" stroke="#1b2a40" strokeWidth="2.200" strokeLinecap="round" />
    </g>
  </svg>
);

const Siri = () => (
  <svg className="h-[58px] w-[58px]" viewBox="0 0 58 58">
    <defs>
      <radialGradient id="siriPink" cx="0.5" cy="0.2" r="0.500"><stop offset="0" stopColor="#d12a86" /><stop offset="1" stopColor="#d12a86" stopOpacity="0" /></radialGradient>
      <radialGradient id="siriBlue" cx="0.25" cy="0.750" r="0.450"><stop offset="0" stopColor="#1fa2e0" /><stop offset="1" stopColor="#1fa2e0" stopOpacity="0" /></radialGradient>
      <radialGradient id="siriTeal" cx="0.85" cy="0.600" r="0.400"><stop offset="0" stopColor="#1bb39a" /><stop offset="1" stopColor="#1bb39a" stopOpacity="0" /></radialGradient>
      <radialGradient id="siriCore"><stop offset="0" stopColor="#fff" /><stop offset="1" stopColor="#cdf6ff" stopOpacity="0" /></radialGradient>
    </defs>
    <rect width="58" height="58" fill="#1d1436" />
    <circle cx="29" cy="29" r="24.500" fill="#1d2350" />
    <circle cx="29" cy="29" r="24.500" fill="url(#siriPink)" />
    <circle cx="29" cy="29" r="24.500" fill="url(#siriBlue)" />
    <circle cx="29" cy="29" r="24.500" fill="url(#siriTeal)" />
    <path d="M9 42c6-7 12-12 19-15l2 2c-8 3-15 7-21 13z" fill="#b9f3f2" />
    <path d="M29 28c8 1 14 5 19 12-8-3-14-6-20-10z" fill="#8df0df" opacity="0.900" />
    <path d="M28 28c4 6 6 14 6 22l-3 1c-1-8-3-15-5-22z" fill="#f27fc0" opacity="0.900" />
    <path d="M28 29c-1-7 0-12 4-17-1 6-1 11-1 17z" fill="#f6b3d9" opacity="0.700" />
    <path d="M17 20c5 1 9 4 12 8 5-4 10-6 16-6-6 2-11 5-15 8-6-2-10-5-13-10z" fill="#f2c6e4" opacity="0.750" />
    <circle cx="29" cy="28" r="9" fill="url(#siriCore)" />
    <circle cx="29" cy="29" r="24.500" fill="none" stroke="#8d9cc4" strokeWidth="1.300" />
  </svg>
);

const petals = [
  ['#f89b1c', 'rotate(0 29 29)'], ['#e3d51c', 'rotate(45 29 29)'], ['#a2c73b', 'rotate(90 29 29)'], ['#5cb38a', 'rotate(135 29 29)'],
  ['#66a7dc', 'rotate(180 29 29)'], ['#9377b8', 'rotate(225 29 29)'], ['#d8708f', 'rotate(270 29 29)'], ['#f2533c', 'rotate(315 29 29)'],
];

const Preview = ({ cls }: { cls: string }) => (
  <svg className={cls} viewBox="0 0 58 58">
    <rect width="58" height="58" rx="14" fill="#f0f0f2" />
    <rect x="4" y="4" width="50" height="50" rx="10" fill="#94b9ee" />
    <path d="M4 31h50v12a10 10 0 0 1-10 10H14A10 10 0 0 1 4 44z" fill="#25406f" />
    <path d="M4 42c8-5 14 4 22 2v10H14A10 10 0 0 1 4 45z" fill="#b7b4a8" />
    <path d="M32 38h22l5 20a3 3 0 0 1-3 3H29a3 3 0 0 1-3-3z" fill="#d3d6da" stroke="#6e7278" />
    <rect x="30" y="28" width="26" height="12" rx="3" fill="#111" />
    <path d="M36 46h8v8h-8zM46 49h6v7h-6z" fill="#70757b" />
  </svg>
);

type DockItem = { el: ReactNode; dot?: boolean; badge?: boolean };

const dockApps: DockItem[] = [
  { el: <Finder cls="h-[58px] w-[58px]" />, dot: true },
  {
    el: (
      <App58 cls="bg-[#c6cfdd]">
        <svg className="h-[40px] w-[40px]" viewBox="0 0 40 40">
          {['#5ddc4a', '#fbb92f', '#f2832c', '#d31f26', '#9aa0a6', '#fb3e62', '#9d4bd6', '#2b9df4', '#39c79a'].map((c, i) => (
            <rect key={c} x={(i % 3) * 14} y={Math.floor(i / 3) * 14} width="11" height="11" rx="3" fill={c} />
          ))}
        </svg>
      </App58>
    ),
  },
  {
    el: (
      <App58 cls="flex-col justify-start! bg-[#f7f6f4] font-['Inter',sans-serif]">
        <div className="flex h-[18px] w-full shrink-0 items-center justify-center bg-[#f0524c] pr-[4px] text-[11px] font-semibold text-white">FEB</div>
        <span className="text-[35px] leading-[38px] font-light tracking-[-1px] text-[#222]">16</span>
      </App58>
    ),
    badge: true,
  },
  {
    el: (
      <App58 cls="relative bg-[#ad8248]">
        <svg className="h-[38px] w-[38px]" viewBox="0 0 38 38" fill="#936b35"><circle cx="19" cy="19" r="18" fill="none" stroke="#8a642f" strokeWidth="1.500" /><circle cx="19" cy="14" r="6" /><path d="M6 31c3-10 23-10 26 0-7 8-19 8-26 0z" /></svg>
        <div className="absolute top-[14px] right-0 h-[36px] w-[3px] bg-linear-to-b from-[#c9c9c9] from-25% via-[#57b6e8] via-50% to-[#58c04a]" />
      </App58>
    ),
  },
  {
    el: (
      <App58 cls="flex-col justify-start! bg-[#f3f2ee]">
        <div className="h-[15px] w-full bg-[#fdca3a]" /><div className="h-[2px] w-full bg-[#b5b0a4]" />
        <div className="mt-[11px] h-[1px] w-full bg-[#cfcdc8]" /><div className="mt-[14px] h-[1px] w-full bg-[#cfcdc8]" />
      </App58>
    ),
  },
  { el: <App58 cls=""><Siri /></App58> },
  {
    el: (
      <App58 cls="bg-white">
        <svg className="h-[58px] w-[58px]" viewBox="0 0 58 58">
          {petals.map(([c, t]) => <rect key={c} x="21.500" y="4" width="15" height="25" rx="7.500" fill={c} opacity="0.850" transform={t} />)}
        </svg>
      </App58>
    ),
  },
  {
    el: (
      <App58 cls="items-start! justify-start! border-2 border-[#cfdde2] bg-black">
        <div className="m-[3px] h-[48px] w-[48px] rounded-[8px] border border-[#444] bg-[#232323] pl-[4px] font-['Liberation_Mono',monospace] text-[14px] leading-[20px] font-bold text-white">{'>_'}</div>
      </App58>
    ),
    dot: true,
  },
  {
    el: (
      <div className="relative flex h-[58px] w-[58px] items-center justify-center">
        <div className="absolute top-0 left-[1px] h-[32px] w-[34px] rounded-full bg-[#1797d8]" />
        <div className="absolute right-[1px] bottom-0 h-[32px] w-[34px] rounded-full bg-[#1480cf]" />
        <div className="relative flex h-[54px] w-[54px] items-center justify-center rounded-full bg-linear-to-b from-[#22b4ee] to-[#1685d6] font-['Open_Sans',sans-serif] text-[42px] leading-none font-bold text-white">S</div>
      </div>
    ),
  },
  {
    el: (
      <App58 cls="bg-linear-to-b from-[#fb5c74] to-[#fa233b]">
        <svg className="h-[40px] w-[32px]" viewBox="0 0 32 40" fill="#fff"><path d="M9 6l22-5v27h-3V11L12 14.500V33H9z" /><ellipse cx="6.500" cy="34" rx="6" ry="4.800" /><ellipse cx="25.500" cy="29.500" rx="6" ry="4.800" /></svg>
      </App58>
    ),
  },
  { el: <Preview cls="h-[58px] w-[58px] overflow-visible" />, dot: true },
  {
    el: (
      <App58 cls="bg-white">
        <svg className="h-[40px] w-[40px]" viewBox="0 0 40 40">
          <rect x="12" y="0" width="7.500" height="8" rx="3.700" fill="#36c5f0" /><rect x="0" y="10.500" width="19.500" height="8" rx="4" fill="#36c5f0" />
          <rect x="21.500" y="0" width="8" height="18.500" rx="4" fill="#2eb67d" /><rect x="32" y="10.500" width="8" height="8" rx="3.700" fill="#2eb67d" />
          <rect x="21.500" y="21.500" width="18.500" height="8" rx="4" fill="#ecb22e" /><rect x="21.500" y="32" width="8" height="8" rx="3.700" fill="#ecb22e" />
          <rect x="10.500" y="21.500" width="8" height="18.500" rx="4" fill="#e01e5a" /><rect x="0" y="21.500" width="8" height="8" rx="3.700" fill="#e01e5a" />
        </svg>
      </App58>
    ),
  },
  { el: <App58 cls="bg-linear-to-b from-[#5ff07a] to-[#1ec32f]"><FaWhatsapp className="h-[50px] w-[50px] text-white" /></App58> },
  {
    el: (
      <App58 cls="bg-white">
        <svg className="h-[52px] w-[52px]" viewBox="0 0 52 52">
          <circle cx="26" cy="26" r="25" fill="#fbc02e" />
          <path d="M26 26L4.300 13.500A25 25 0 0 1 47.700 13.500L47 14.500H26z" fill="#e33b2e" />
          <path d="M4.300 13.500L15.500 32 26 38l-5 12.500A25 25 0 0 1 4.300 13.500z" fill="#2a9d4a" />
          <path d="M26 38.500L20.500 50.500c2 .5 4 .5 5.500.500l10-19z" fill="#fbc02e" />
          <circle cx="26" cy="26" r="12.500" fill="#fff" /><circle cx="26" cy="26" r="10" fill="#2f7de9" />
        </svg>
      </App58>
    ),
    dot: true,
  },
  {
    el: (
      <App58 cls="relative bg-white">
        <div className="ml-[6px] h-[40px] w-[40px] rounded-full bg-linear-to-b from-[#ff8f6b] from-50% to-[#d35230] to-50%" />
        <div className="absolute left-[7px] flex h-[23px] w-[23px] items-center justify-center rounded-[3px] bg-[#b7321a] font-['Open_Sans',sans-serif] text-[18px] font-bold text-white">P</div>
      </App58>
    ),
  },
  { el: <App58 cls="bg-linear-to-bl from-[#1b82f5] to-[#0a50e0] font-['Open_Sans',sans-serif] text-[17px] font-semibold tracking-[-0.400px] text-white">zoom</App58> },
  {
    el: (
      <App58 cls="relative bg-white">
        <div className="ml-[5px] grid h-[40px] w-[34px] grid-cols-2 overflow-hidden rounded-[3px]">
          <div className="bg-[#21a366]" /><div className="bg-[#33c481]" /><div className="bg-[#107c41]" /><div className="bg-[#21a366]" />
          <div className="bg-[#185c37]" /><div className="bg-[#107c41]" /><div className="bg-[#185c37]" /><div className="bg-[#185c37]" />
        </div>
        <div className="absolute left-[5px] flex h-[23px] w-[23px] items-center justify-center rounded-[3px] bg-[#117a3f] font-['Open_Sans',sans-serif] text-[18px] font-bold text-white">X</div>
      </App58>
    ),
  },
  {
    el: (
      <App58 cls="bg-[#f4f4f5]">
        <div className="flex h-[50px] w-[50px] items-center justify-center rounded-full bg-linear-to-b from-[#3fb4ee] to-[#1a8bd0]"><FaTelegramPlane className="mr-[3px] h-[32px] w-[32px] text-white" /></div>
      </App58>
    ),
  },
  {
    el: (
      <App58 cls="bg-[#0b0e11]">
        <svg className="h-[46px] w-[46px]" viewBox="0 0 46 46" fill="#f3ba2f"><path d="M23 0l14 14-5.500 5.500L23 11l-8.500 8.500L9 14zM23 46L9 32l5.500-5.500L23 35l8.500-8.500L37 32zM23 18l5 5-5 5-5-5zM5 18l5 5-5 5-5-5zM41 18l5 5-5 5-5-5z" /></svg>
      </App58>
    ),
  },
  {
    el: (
      <App58 cls="bg-[#d3d3d1]">
        <svg className="h-[44px] w-[32px]" viewBox="0 0 32 44">
          <rect width="32" height="44" rx="4" fill="#2b2d31" /><rect x="3" y="3" width="26" height="9" rx="2" fill="#4a4f55" />
          {[18, 27].map((y) => [6.5, 16, 25.500].map((x) => <circle key={`${x}-${y}`} cx={x} cy={y} r="3.200" fill={x > 20 ? '#f38b2b' : '#d9d9d9'} />))}
          <rect x="3.300" y="33" width="16" height="6.400" rx="3.200" fill="#e4e4e4" /><circle cx="25.500" cy="36.200" r="3.200" fill="#f38b2b" />
        </svg>
      </App58>
    ),
    dot: true,
  },
  {
    el: (
      <svg className="mt-[-6px] -mb-[6px] h-[70px] w-[68px]" viewBox="0 0 68 70">
        <path d="M50 26l-9-17 7 6-1-13 5 9 5-9 0 11 8-6-7 19z" fill="#2c8a34" />
        <ellipse cx="50" cy="43" rx="16" ry="20" fill="#c08a2e" />
        <path d="M38 32l22 24M36 42l16 20M44 25l20 22M62 32L40 56M64 42L48 62M56 25L36 47" stroke="#6e4613" strokeWidth="1.300" />
        <path d="M8 8l4 26M30 12l-5 20" stroke="#4a3f9a" strokeWidth="2" /><circle cx="7" cy="7" r="3" fill="#e832a6" /><circle cx="9" cy="14" r="4.500" fill="#b9b56a" /><circle cx="11" cy="21" r="4" fill="#b71522" /><path d="M20 17c0-9 14-9 16 2-5-3-11-3-16-2z" fill="#35c43f" />
        <path d="M2 31c5-6 29-6 34 0 0 13-6 20-17 20S2 44 2 31z" fill="#d2c3bd" opacity="0.850" />
        <path d="M3 33c4-3 28-3 32 0-1 6-2 9-5 11H8c-3-2-4-5-5-11z" fill="#dc3524" /><path d="M8 43h22c-5 7-17 7-22 0z" fill="#e8b07c" />
        <path d="M19 50v14" stroke="#b9bcc4" strokeWidth="4" /><ellipse cx="19" cy="65" rx="10" ry="4.500" fill="#c7c9cf" />
      </svg>
    ),
  },
  {
    el: (
      <div className="relative -mt-[5px] -mb-[5px] flex h-[68px] w-[68px] items-center justify-center">
        <svg className="absolute h-[68px] w-[68px]" viewBox="0 0 68 68"><path d="M0 14L12 0l26 6-6 46H8z" fill="#b84cf0" /><path d="M12 0l24 6-6 12H2z" fill="#f9317e" opacity="0.850" /><path d="M30 14L40 4l18 4 10 26-6 12 6 8-24 14-24-10z" fill="#a84ff2" /></svg>
        <div className="relative flex h-[40px] w-[40px] flex-col bg-black pt-[1px] pl-[4px] font-['Open_Sans',sans-serif] text-[22px] leading-[26px] font-bold text-white">PS<div className="mt-[4px] h-[3px] w-[14px] bg-white" /></div>
      </div>
    ),
  },
  {
    el: (
      <svg className="-mt-[7px] -mb-[7px] h-[72px] w-[72px]" viewBox="0 0 72 72">
        <circle cx="36" cy="36" r="35.500" fill="#2a7bad" />
        <path d="M11 46C8 26 16 13 30 13c6 0 9 2 13 4 6 3 8 2 11 2 6 3 9 11 9 20 0 8-2 14-8 18h-4c3-5 4-9 3-14l-5-3c-1 7-1 11-1 18h-9l-2-13h-6l-2 13h-9l-3-16-3-2z" fill="#fff" />
        <path d="M52 19c-6 2-10 8-8 16 3-5 6-4 9-5" fill="none" stroke="#2a7bad" strokeWidth="1.800" />
      </svg>
    ),
  },
  {
    el: (
      <App58 cls="bg-white">
        <svg className="h-[42px] w-[42px]" viewBox="0 0 42 42"><path d="M1 28l4 3L31 12V1z" fill="#0f62a8" /><path d="M1 14l4-3 26 20v10z" fill="#1585cf" /><path d="M30 0l11 5v32l-11 5z" fill="#2a9df0" /></svg>
      </App58>
    ),
    dot: true,
  },
  { el: <App58 cls="bg-linear-to-b from-[#7484f5] to-[#5765f2]"><FaDiscord className="h-[43px] w-[43px] text-white" /></App58>, dot: true },
];

const dockTools: DockItem[] = [
  {
    el: (
      <App58 cls="bg-linear-to-b from-[#c9d8de] to-[#96928d]">
        <svg className="h-[52px] w-[52px]" viewBox="0 0 52 52" fill="none">
          <circle cx="26" cy="26" r="23" fill="#3b3e41" stroke="#2a2c2e" strokeWidth="3" strokeDasharray="2 1.500" /><circle cx="26" cy="26" r="18" stroke="#a8abad" strokeWidth="3" />
          <circle cx="26" cy="26" r="13" stroke="#86898b" strokeWidth="1.500" /><path d="M26 26h17M26 26L17 11M26 26l-9 15" stroke="#b9bcbe" strokeWidth="3.500" /><circle cx="26" cy="26" r="4.500" fill="#4b4e50" stroke="#b9bcbe" strokeWidth="2" />
        </svg>
      </App58>
    ),
    dot: true,
    badge: true,
  },
  {
    el: (
      <App58 cls="bg-linear-to-b from-[#4a4a4a] to-[#3e3e3e]">
        <svg className="h-[40px] w-[32px]" viewBox="0 0 32 40"><path d="M0 10L32 0v11L15 17l17 5.500V30L0 40V29l16-5.500L0 18z" fill="#ff9800" /></svg>
      </App58>
    ),
    dot: true,
  },
  {
    el: (
      <svg className="-mt-[6px] -mb-[5px] h-[69px] w-[68px]" viewBox="0 0 68 69">
        <rect x="15" y="0" width="38" height="26" fill="#f0f0f1" /><rect x="0" y="22" width="68" height="36" rx="4" fill="#c9cacc" /><rect x="13" y="24" width="42" height="9" fill="#55575a" />
        <rect x="12" y="39" width="44" height="8" rx="3" fill="#1c1d1f" /><rect x="16" y="46" width="38" height="22" fill="#fff" /><path d="M18 47h32v18H18z" fill="#8fb4e3" /><path d="M36 47h6l4 8-4 8h-6l4-9z" fill="#efb13f" />
        <circle cx="59" cy="33" r="2" fill="none" stroke="#555" /><circle cx="64" cy="33" r="2" fill="none" stroke="#555" />
        <circle cx="13" cy="56" r="12.500" fill="#f97a35" stroke="#e8e8e8" /><path d="M5 60l6-7 4 3 7-5-6 7-4-3z" fill="#fff" />
      </svg>
    ),
    dot: true,
  },
  {
    el: (
      <App58 cls="bg-linear-to-b from-[#5bf175] to-[#28c13b]">
        <svg className="h-[26px] w-[42px]" viewBox="0 0 42 26" fill="#f2fff3"><rect width="28" height="26" rx="7" /><path d="M31 10l8-7c1-1 3-1 3 1v18c0 2-2 2-3 1l-8-7z" /></svg>
      </App58>
    ),
  },
];

const WindowThumb = () => (
  <div className="relative flex h-[38px] w-[68px] bg-[#fbfbfb]">
    <div className="w-[18px] bg-[#ebe4e6] pt-[6px] pl-[2px]"><div className="h-[22px] w-[10px] border-y border-[#cfc8cc]" /></div>
    <div className="flex flex-1 flex-col gap-[3px] border-t-[5px] border-[#eee9ea] px-[3px] pt-[3px]">
      {Array.from({ length: 7 }, (_, i) => <div key={i} className="h-[1px] w-full bg-[#d5dbe2]" />)}
    </div>
    <Finder cls="absolute right-[0px] -bottom-[13px] h-[23px] w-[23px]" />
  </div>
);

const DocThumb = ({ side }: { side: string }) => (
  <div className="relative flex h-[68px] w-[64px] bg-white">
    <div className={`w-[12px] ${side}`} />
    <div className="flex flex-1 flex-col gap-[3px] border-t-[5px] border-[#eae2e4] px-[4px] pt-[3px]">
      {Array.from({ length: 10 }, (_, i) => <div key={i} className={i % 3 === 0 ? 'h-[3px] w-full bg-[#b4b4b8]' : 'h-[2px] w-[80%] bg-[#dcdce0]'} />)}
    </div>
    <Preview cls="absolute -right-[3px] bottom-[0px] h-[23px] w-[23px] overflow-visible" />
  </div>
);

const dockThumbs: ReactNode[] = [
  <div className="flex h-[69px] w-[52px] flex-col">
    <div className="mx-auto h-[7px] w-[40px] border-2 border-b-0 border-white bg-[#7fb0bd]" />
    <div className="flex flex-1 flex-col items-center justify-center border-2 border-white bg-linear-to-b from-[#8b7a52] via-[#8f5020] to-[#3c1a0c] pt-[10px] font-['Open_Sans',sans-serif] text-[9px] leading-[10px] font-bold tracking-[-0.500px] text-[#f3b13a]">
      <span>CUBA</span><span>REGGUNAI</span><span>SHOW</span>
      <span className="mt-[8px] text-[5px] leading-[6px]">COMING SOON</span>
    </div>
  </div>,
  <WindowThumb />,
  <WindowThumb />,
  <DocThumb side="bg-[#9a9a9c]" />,
  <DocThumb side="bg-[#e5dcde]" />,
  <svg className="h-[68px] w-[54px]" viewBox="0 0 54 68">
    <path d="M2 8l8-7 8 4 8-3 6 3 8-4 10 8-3 9H4z" fill="#e8e8ea" /><path d="M14 8l6-5 4 8zM32 4l6 8-8 2z" fill="#444" /><path d="M22 8l8 2-4 5z" fill="#36b7c9" />
    <path d="M1 9c14 8 38 8 52 0l-7 54c-8 6-31 6-38 0z" fill="#d6d7d9" opacity="0.930" /><path d="M1 9c14 8 38 8 52 0" fill="none" stroke="#f2f2f3" strokeWidth="2" />
    <path d="M12 20l3 42M42 20l-3 42" stroke="#cdced1" strokeWidth="1.500" />
  </svg>,
];

const Badge = () => (
  <div className="absolute -top-[21px] left-[46px] flex h-[27px] w-[27px] items-center justify-center rounded-full bg-[#fb4340] font-['Inter',sans-serif] text-[17px] leading-none text-white">1</div>
);

function DockCell({ item }: { item: DockItem }) {
  return (
    <div className="relative flex w-[76.670px] shrink-0 flex-col items-center pt-[13px]">
      <div className="flex h-[58px] items-center justify-center">{item.el}</div>
      {item.dot && <div className="mt-[9px] h-[8px] w-[8px] rounded-full bg-black" />}
      {item.badge && <div className="absolute top-[26px] left-0"><Badge /></div>}
    </div>
  );
}

const DockDivider = () => (
  <div className="flex w-[34px] shrink-0 justify-center pt-[10px]"><div className="h-[70px] w-[2px] bg-[#3c3e49]" /></div>
);

function Dock() {
  return (
    <div className="absolute top-[1696px] left-[58px] flex h-[94px] w-[2763px] rounded-[28px] border-2 border-[#8d93a3] bg-linear-to-r from-[#5c7aa3] via-[#6f737f] via-28% to-[#6f717c] to-40% pl-[4px]">
      {dockApps.map((item, i) => <DockCell key={i} item={item} />)}
      <DockDivider />
      {dockTools.map((item, i) => <DockCell key={i} item={item} />)}
      <DockDivider />
      {dockThumbs.map((el, i) => <DockCell key={i} item={{ el }} />)}
    </div>
  );
}

export default function App() {
  return (
    <div className="relative h-[1800px] w-[2880px] overflow-hidden bg-[#12619f]">
      <div className="absolute top-[46px] left-0 h-[60px] w-[580px] bg-[#d82c5c]" />
      <Desktop />
      <MenuBar />
      <ChromeWindow />
      <Dock />
    </div>
  );
}
